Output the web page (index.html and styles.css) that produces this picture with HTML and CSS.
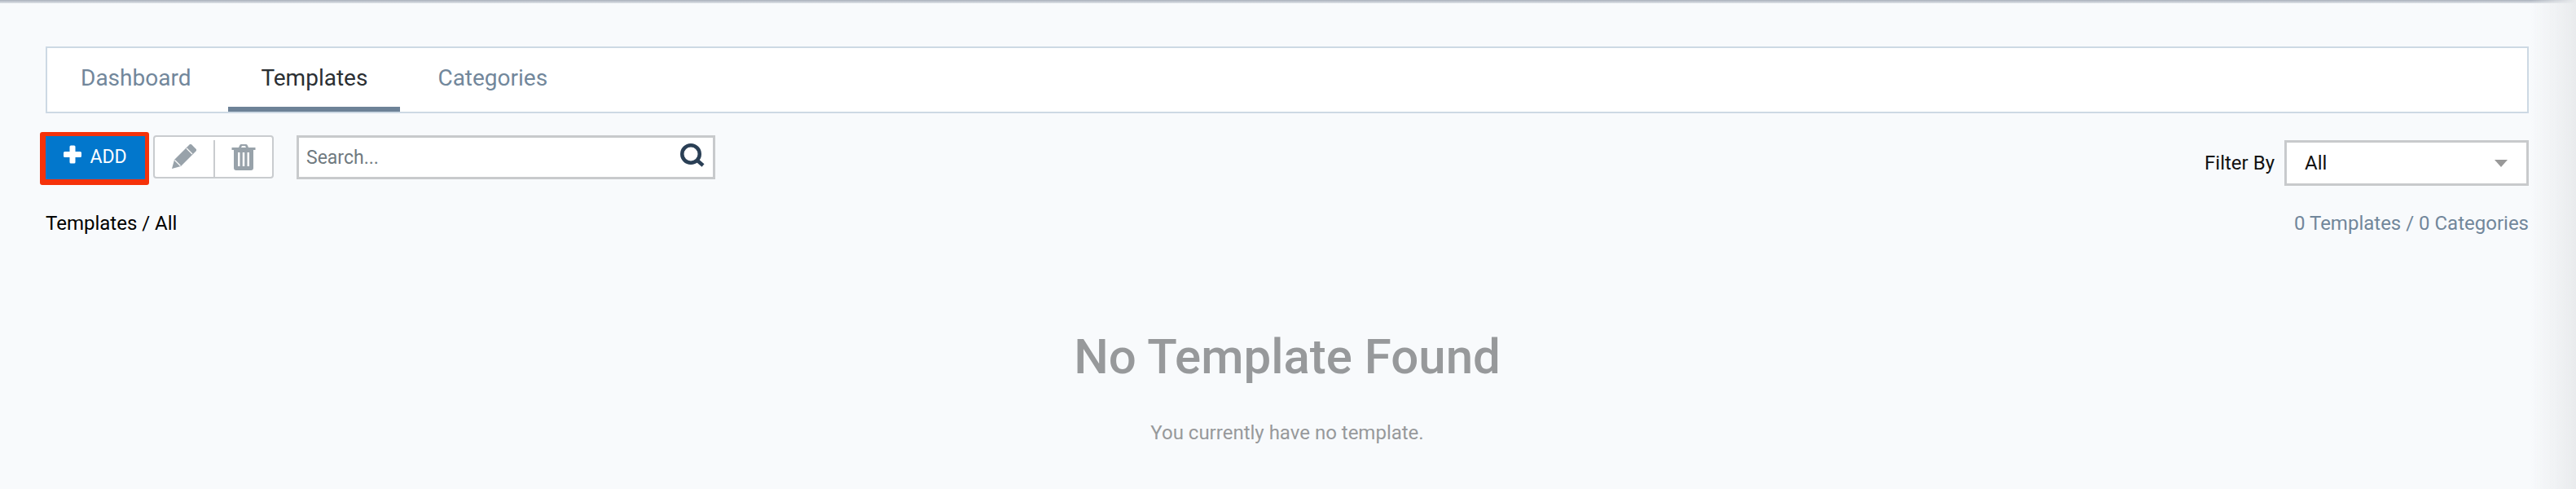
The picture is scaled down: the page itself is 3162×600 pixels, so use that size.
FILE: index.html
```html
<!DOCTYPE html>
<html lang="en">
<head>
  <meta charset="UTF-8" />
  <title>Templates</title>
  <link rel="stylesheet" href="styles.css">
</head>
<body>

  <div class="top-shadow"></div>

  <div class="page">
    <nav class="tabs">
      <a class="tab">Dashboard</a>
      <a class="tab active">Templates</a>
      <a class="tab">Categories</a>
    </nav>

    <div class="toolbar">
      <button class="add-btn">
        <svg class="plus-icon" viewBox="0 0 22 23"><path d="M7.500 2a1.500 1.500 0 0 1 1.500-1.500h4A1.500 1.500 0 0 1 14.500 2v6H20.500A1.500 1.500 0 0 1 22 9.500v4a1.500 1.500 0 0 1-1.500 1.500H14.500v6a1.500 1.500 0 0 1-1.500 1.500H9A1.500 1.500 0 0 1 7.500 21V15H1.500A1.500 1.500 0 0 1 0 13.500v-4A1.500 1.500 0 0 1 1.500 8h6z" /></svg>
        ADD
      </button>

      <div class="icon-group">
        <div class="icon-btn">
          <svg class="edit-icon" viewBox="0 0 30 30">
            <path d="M0 30l3-11L21.500.500a2 2 0 0 1 2.800 0l5.200 5.200a2 2 0 0 1 0 2.800L11 27z" />
            <path class="edit-band" d="M3.500 19.500l7 7M18 5l7 7" />
          </svg>
        </div>
        <div class="icon-btn">
          <svg class="trash-icon" viewBox="0 0 30 32">
            <path d="M9 4l1.500-3.200Q11 0 12 0h6q1 0 1.500.8L21 4h8.500v3H27v22a3 3 0 0 1-3 3H6a3 3 0 0 1-3-3V7H.500V4zM12 4h6l-1-2h-4zM8 10v17h2.500V10zM13.750 10v17h2.500V10zM19.500 10v17H22V10z" fill-rule="evenodd" />
          </svg>
        </div>
      </div>

      <div class="search-box">
        <input type="text" class="search-input" placeholder="Search..." />
        <svg class="search-icon" viewBox="0 0 31 29">
          <circle cx="13" cy="13" r="10.750" />
          <path d="M20.500 20.500l7.500 6.500" />
        </svg>
      </div>

      <div class="filter">
        <span class="filter-label">Filter By</span>
        <div class="filter-select">
          <span>All</span>
          <span class="caret"></span>
        </div>
      </div>
    </div>

    <div class="summary">
      <span class="crumb">Templates / All</span>
      <span class="count">0 Templates / 0 Categories</span>
    </div>

    <div class="empty">
      <h2>No Template Found</h2>
      <p>You currently have no template.</p>
    </div>
  </div>

</body>
</html>
```

FILE: styles.css
```css
html, body {
  height: 100%;
}

body {
  margin: 0;
  background-color: #f8fafc;
  font-family: 'Roboto', 'Liberation Sans', sans-serif;
  overflow: hidden;
}

/* right edge fade */
body::after {
  content: '';
  position: fixed;
  top: 0;
  right: 0;
  bottom: 0;
  width: 56px;
  background: linear-gradient(to right, rgba(233,235,237,0), #e9ebed);
}

.top-shadow {
  height: 4px;
  background: linear-gradient(to bottom, #a9b0bb, #dfe3e8);
}

.page {
  padding: 53px 58px 0 56px;
}

/* tabs */
.tabs {
  display: flex;
  height: 82px;
  box-sizing: border-box;
  padding-left: 1px;
  background-color: white;
  border: 2px solid #cdd9e4;
}

.tab {
  display: flex;
  align-items: center;
  margin-right: 6px;
  padding: 0 40px;
  font-size: 28px;
  color: #72879b;
  border-bottom: 6px solid transparent;
  height: 78px;
  box-sizing: border-box;
}

.tab.active {
  color: #2b2f33;
  border-bottom-color: #6d8297;
}

/* toolbar */
.toolbar {
  display: flex;
  align-items: flex-start;
  margin-top: 23px;
  margin-left: -7px;
}

.add-btn {
  display: flex;
  align-items: center;
  justify-content: center;
  gap: 10px;
  width: 134px;
  height: 65px;
  padding: 0 0 3px;
  box-sizing: border-box;
  background-color: #0277cc;
  color: white;
  font-family: inherit;
  font-size: 23px;
  border: solid #f5320a;
  border-width: 5px 5px 7px 7px;
  border-radius: 3px;
}

.plus-icon {
  width: 22px;
  height: 23px;
  margin-bottom: 5px;
  fill: white;
}

.icon-group {
  display: flex;
  margin-top: 4px;
  margin-left: 5px;
  width: 148px;
  height: 53px;
  box-sizing: border-box;
  border: 2px solid #c9cccf;
  border-radius: 4px;
  background-color: white;
}

.icon-btn {
  display: flex;
  align-items: center;
  justify-content: center;
  flex: 1;
}

.icon-btn:first-child {
  flex: none;
  width: 72px;
  margin-top: 4px;
  border-right: 2px solid #c9cccf;
}

.edit-icon {
  width: 30px;
  height: 30px;
  margin-top: -6px;
  fill: #98a2aa;
}

.edit-band {
  fill: none;
  stroke: white;
  stroke-width: 1.200;
}

.trash-icon {
  width: 30px;
  height: 32px;
}

.trash-icon path {
  fill: #98a2aa;
}

.search-box {
  position: relative;
  margin-top: 4px;
  margin-left: 28px;
  width: 514px;
  height: 54px;
}

.search-input {
  width: 100%;
  height: 100%;
  box-sizing: border-box;
  padding: 0 60px 0 9px;
  font-family: inherit;
  font-size: 23px;
  border: 3px solid #c8cacc;
  outline: none;
  background-color: white;
}

.search-input::placeholder {
  color: #707a80;
  opacity: 1;
}

.search-icon {
  position: absolute;
  top: 10px;
  right: 12px;
  width: 31px;
  height: 29px;
  fill: none;
  stroke: #2a3f55;
  stroke-width: 4.500;
}

.filter {
  display: flex;
  align-items: center;
  margin-left: auto;
  margin-top: 10px;
  font-size: 24px;
  color: #111;
}

.filter-label {
  margin-right: 12px;
}

.filter-select {
  display: flex;
  align-items: center;
  justify-content: space-between;
  width: 300px;
  height: 56px;
  box-sizing: border-box;
  padding: 0 23px 0 22px;
  background-color: white;
  border: 3px solid #c8cacc;
}

.caret {
  width: 0;
  height: 0;
  border-left: 8px solid transparent;
  border-right: 8px solid transparent;
  border-top: 9px solid #999;
}

/* summary row */
.summary {
  display: flex;
  justify-content: space-between;
  margin-top: 31px;
  font-size: 24px;
  line-height: 30px;
}

.crumb {
  color: #000;
}

.count {
  color: #72879b;
}

/* empty state */
.empty {
  margin-top: 109px;
  text-align: center;
  color: #97999b;
}

.empty h2 {
  margin: 0;
  font-size: 60px;
  font-weight: 500;
  line-height: 80px;
}

.empty p {
  margin: 38px 0 0;
  font-size: 24px;
  line-height: 30px;
}
```
